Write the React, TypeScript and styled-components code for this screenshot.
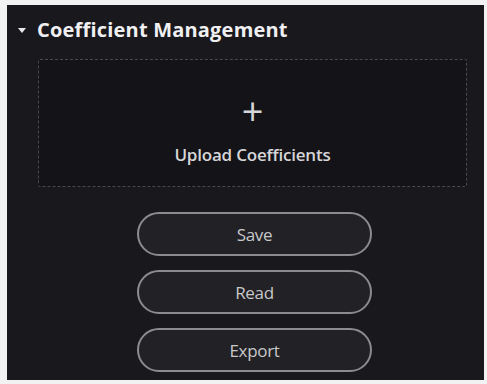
import React, { ReactElement } from "react";
import styled, { createGlobalStyle } from "styled-components";

const GlobalStyle = createGlobalStyle`
  html, body {
    margin: 0;
    background: #f2f2f2;
    font-family: "Open Sans", "Noto Sans", "Liberation Sans", sans-serif;
  }
`;

const Panel = styled.section`
  box-sizing: border-box;
  margin: 5px 3px 4px 7px;
  height: 375px;
  background: #19181d;
  padding: 11px 17px 0 11px;
  display: flex;
  flex-direction: column;
`;

const Header = styled.div`
  display: flex;
  align-items: center;
  gap: 11px;
  height: 26px;
  color: #f0f0f2;
  font-size: 20px;
  font-weight: 700;
  letter-spacing: 0.2px;
`;

const Caret = styled.span`
  width: 0;
  height: 0;
  border-left: 4px solid transparent;
  border-right: 4px solid transparent;
  border-top: 5px solid #e8e8ea;
  margin-top: 2px;
`;

const UploadBox = styled.div`
  box-sizing: border-box;
  margin: 17px 0 0 20px;
  height: 128px;
  padding-top: 14px;
  border: 1px dashed #4a4950;
  border-radius: 2px;
  background: #141318;
  display: flex;
  flex-direction: column;
  align-items: center;
  justify-content: center;
  color: #d6d6d8;
`;

const Plus = styled.span`
  font-size: 38px;
  font-weight: 500;
  line-height: 30px;
`;

const UploadLabel = styled.span`
  font-size: 17px;
  font-weight: 600;
  letter-spacing: -0.2px;
  margin-top: 18px;
`;

const Actions = styled.div`
  display: flex;
  flex-direction: column;
  align-items: center;
  gap: 14px;
  margin-top: 25px;
  padding-left: 24px;
`;

const ActionButton = styled.button`
  box-sizing: border-box;
  width: 235px;
  height: 44px;
  border: 2px solid #8c8b90;
  border-radius: 22px;
  background: #222126;
  color: #c8c8ca;
  font-family: inherit;
  font-size: 17px;
  font-weight: 500;
  letter-spacing: -0.3px;
  cursor: pointer;
`;

const App = (): ReactElement => (
  <>
    <GlobalStyle />
    <Panel>
      <Header>
        <Caret />
        <span>Coefficient Management</span>
      </Header>
      <UploadBox>
        <Plus>+</Plus>
        <UploadLabel>Upload Coefficients</UploadLabel>
      </UploadBox>
      <Actions>
        {["Save", "Read", "Export"].map((label) => (
          <ActionButton key={label}>{label}</ActionButton>
        ))}
      </Actions>
    </Panel>
  </>
);

export default App;
